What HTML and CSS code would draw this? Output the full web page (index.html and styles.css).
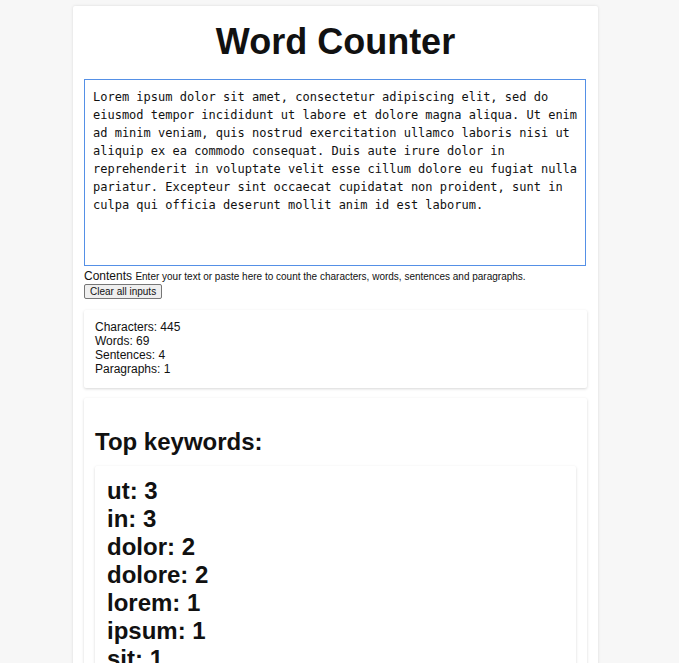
FILE: index.html
```html
<!DOCTYPE html>
<html>
<head>
<meta charset="utf-8">
<link rel="stylesheet" href="styles.css">
</head>
<body>
<div class="page">
  <main class="app">
    <h1 class="title">Word Counter</h1>
    <textarea class="input" id="text" autofocus>Lorem ipsum dolor sit amet, consectetur adipiscing elit, sed do eiusmod tempor incididunt ut labore et dolore magna aliqua. Ut enim ad minim veniam, quis nostrud exercitation ullamco laboris nisi ut aliquip ex ea commodo consequat. Duis aute irure dolor in reprehenderit in voluptate velit esse cillum dolore eu fugiat nulla pariatur. Excepteur sint occaecat cupidatat non proident, sunt in culpa qui officia deserunt mollit anim id est laborum.</textarea>
    <div class="label-row"><label for="text" class="label">Contents</label> <small class="hint">Enter your text or paste here to count the characters, words, sentences and paragraphs.</small></div>
    <button class="clear" type="button">Clear all inputs</button>
    <section class="card stats">
      <div>Characters: 445</div>
      <div>Words: 69</div>
      <div>Sentences: 4</div>
      <div>Paragraphs: 1</div>
    </section>
    <section class="card keywords">
      <h2 class="kw-title">Top keywords:</h2>
      <div class="card kw-list">
        <div class="kw">ut: 3</div>
        <div class="kw">in: 3</div>
        <div class="kw">dolor: 2</div>
        <div class="kw">dolore: 2</div>
        <div class="kw">lorem: 1</div>
        <div class="kw">ipsum: 1</div>
        <div class="kw">sit: 1</div>
        <div class="kw">amet: 1</div>
        <div class="kw">consectetur: 1</div>
        <div class="kw">adipiscing: 1</div>
      </div>
    </section>
  </main>
</div>
</body>
</html>
```
FILE: styles.css
```css
html, body {
  margin: 0;
  padding: 0;
  background: #f7f7f7;
  overflow: hidden;
}
body {
  font-family: "Liberation Sans", Arial, sans-serif;
  color: #111;
  font-size: 12px;
}
.page {
  display: flex;
  justify-content: center;
  padding: 6px 8px 0 0;
}
.app {
  width: 503px;
  background: #fff;
  padding: 15px 11px 20px;
  box-shadow: 0 0 3px rgba(0, 0, 0, 0.12);
  border-radius: 2px;
}
.title {
  margin: 0 0 17px;
  font-size: 36px;
  line-height: 41px;
  font-weight: bold;
  text-align: center;
  color: #111;
}
.input {
  display: block;
  box-sizing: border-box;
  width: 502px;
  height: 187px;
  margin: 0;
  padding: 8px 6px 8px 8px;
  border: 1px solid #5590e6;
  border-radius: 0;
  outline: none;
  resize: none;
  overflow: hidden;
  font-family: "DejaVu Sans Mono", monospace;
  font-size: 12px;
  line-height: 18px;
  color: #111;
  background: #fff;
}
.label-row {
  margin-top: 3px;
  line-height: 14px;
}
.label {
  font-size: 12px;
}
.hint {
  font-size: 10px;
}
.clear {
  display: block;
  margin: 0;
  padding: 1px 5px;
  font-family: "Liberation Sans", Arial, sans-serif;
  font-size: 10px;
  line-height: 11px;
  color: #111;
  background: #efefef;
  border: 1px solid #767676;
  border-radius: 2px;
}
.card {
  background: #fff;
  border-radius: 2px;
  box-shadow: 0 1px 3px rgba(0, 0, 0, 0.16);
}
.stats {
  margin-top: 11px;
  padding: 10px 11px 12px;
  line-height: 14px;
}
.keywords {
  margin-top: 10px;
  padding: 30px 11px 20px;
}
.kw-title {
  margin: 0 0 10px;
  font-size: 24px;
  line-height: 28px;
  font-weight: bold;
}
.kw-list {
  padding: 11px 12px 12px;
}
.kw {
  font-size: 24px;
  line-height: 28px;
  font-weight: bold;
}
```
